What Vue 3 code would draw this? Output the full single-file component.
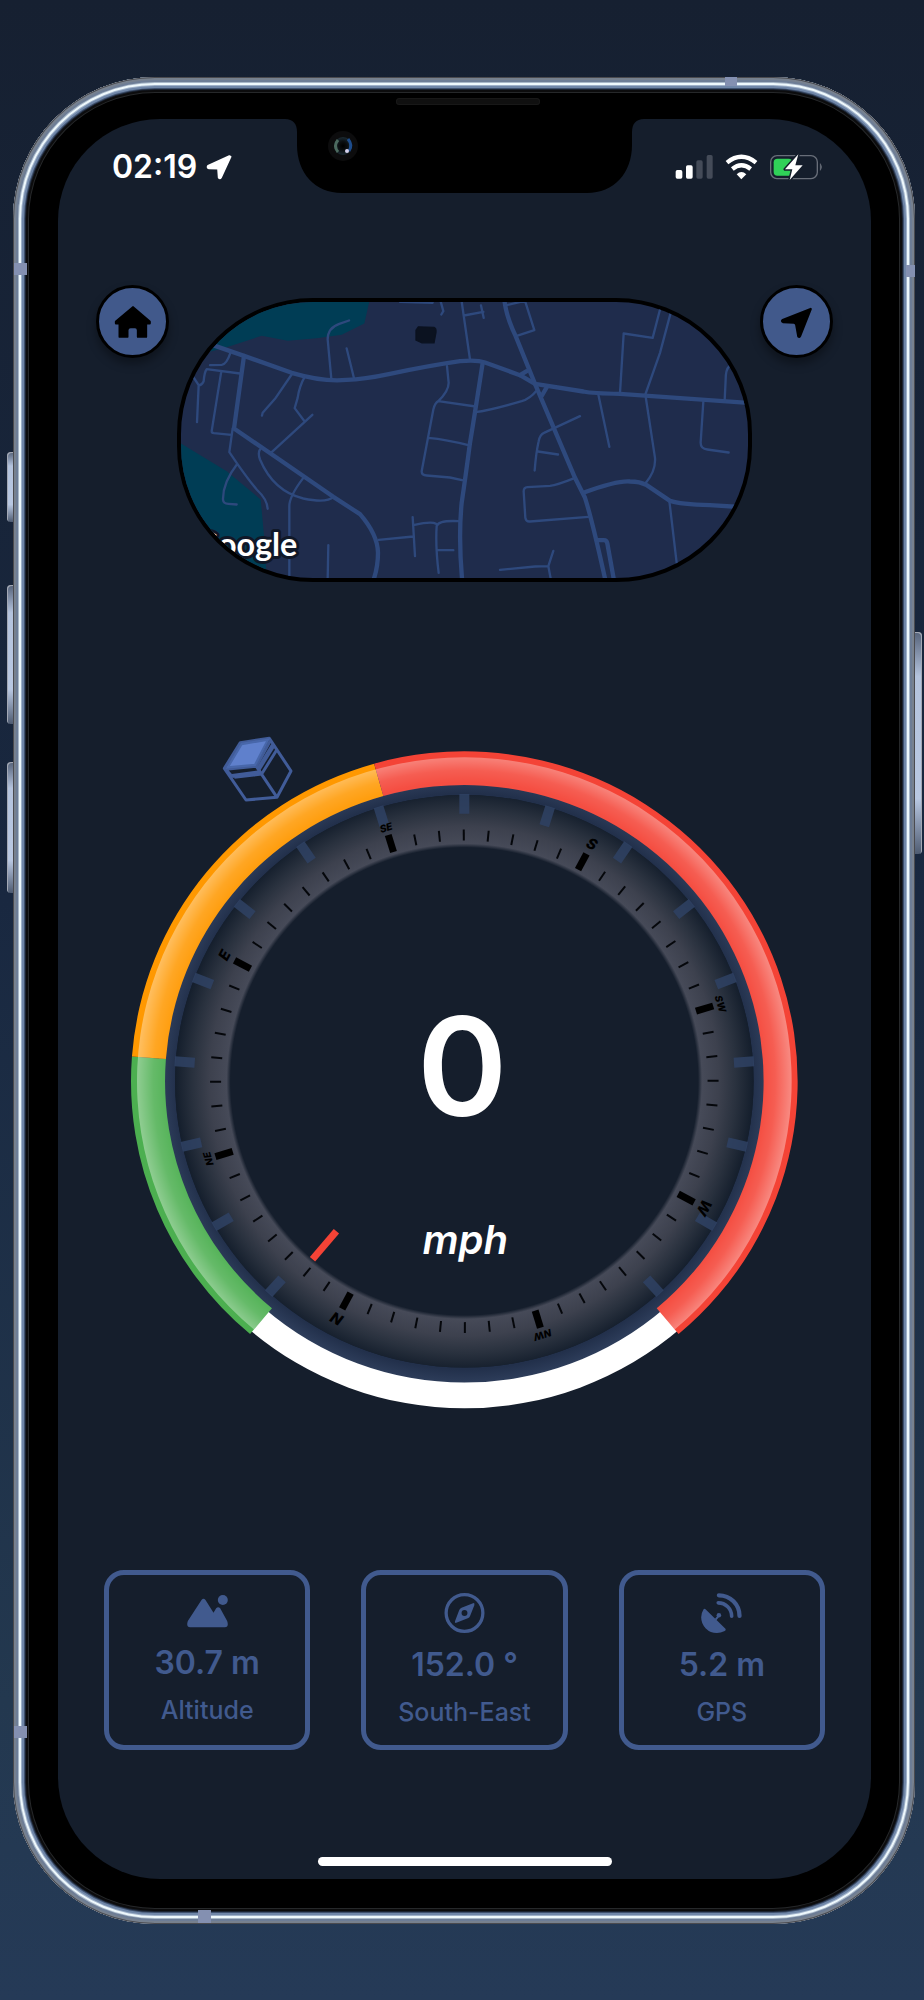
<script setup>
const heading = 152
const rad = (deg) => (deg * Math.PI) / 180
const CX = 333
const CY = 330
const SQUASH = 0.99

function point(r, deg) {
  return [
    (CX + r * Math.sin(rad(deg))).toFixed(2),
    (CY - r * SQUASH * Math.cos(rad(deg))).toFixed(2),
  ]
}

function spoke(r1, r2, deg) {
  const [x1, y1] = point(r1, deg)
  const [x2, y2] = point(r2, deg)
  return { x1, y1, x2, y2 }
}

function band(rIn, rOut, from, to) {
  const large = to - from > 180 ? 1 : 0
  const [a, b, c, d] = [point(rOut, from), point(rOut, to), point(rIn, to), point(rIn, from)]
  return `M${a} A${rOut} ${rOut * SQUASH} 0 ${large} 1 ${b} L${c} A${rIn} ${rIn * SQUASH} 0 ${large} 0 ${d} Z`
}

const zones = [
  { name: 'slow', path: band(299, 333, -140, -85.7) },
  { name: 'medium', path: band(299, 333, -85.7, -15.7) },
  { name: 'fast', path: band(299, 333, -15.7, 140) },
]
const glossPath = band(299, 327, -140, 140)
const restPath = band(304, 330, 139, 221)

const speedTicks = Array.from({ length: 17 }, (_, i) => spoke(270, 290, (i - 8) * 17.2))
const compassTicks = Array.from({ length: 64 }, (_, i) => i)
  .filter((i) => i % 8)
  .map((i) => spoke(243, 254, i * 5.625 - heading))
const directions = ['N', 'NE', 'E', 'SE', 'S', 'SW', 'W', 'NW'].map((name, i) => {
  const angle = i * 45 - heading
  const [x, y] = point(name.length > 1 ? 264 : 266, angle)
  return { name, angle, x, y, mark: spoke(242, 260, angle) }
})
const needle = spoke(198, 235, -139.8)

const speed = 0
const stats = [
  { icon: 'altitude', value: '30.7 m', label: 'Altitude' },
  { icon: 'compass', value: '152.0 °', label: 'South-East' },
  { icon: 'gps', value: '5.2 m', label: 'GPS' },
]
</script>

<template>
  <div class="page">
    <div class="phone">
      <span class="side mute"></span>
      <span class="side volume-up"></span>
      <span class="side volume-down"></span>
      <span class="side power"></span>
      <span class="antenna left-top"></span>
      <span class="antenna right-top"></span>
      <span class="antenna top"></span>
      <span class="antenna left-bottom"></span>
      <span class="antenna bottom"></span>
      <span class="speaker"></span>

      <main class="screen">
        <svg class="notch" viewBox="0 0 359 74" aria-hidden="true">
          <defs>
            <radialGradient id="lens">
              <stop offset="0" stop-color="#000" />
              <stop offset=".5" stop-color="#0b0f12" />
              <stop offset="1" stop-color="#1b2b33" />
            </radialGradient>
          </defs>
          <path d="M0 0C8 0 12 5 12 13V26C12 54 30 74 57 74H302C329 74 347 54 347 26V13C347 5 351 0 359 0Z" />
          <circle cx="58" cy="27" r="15" fill="#0c0c0d" />
          <circle cx="58" cy="27" r="9" fill="url(#lens)" />
          <path d="M53 21Q48 27 53 33" fill="none" stroke="#4c6a5f" stroke-width="3" />
          <path d="M63 20Q68 26 64 32" fill="none" stroke="#1d4c8c" stroke-width="3" />
          <circle cx="62" cy="32" r="2" fill="#d6d2ee" />
        </svg>

        <header class="status">
          <div class="clock">
            <time>02:19</time>
            <svg class="location" viewBox="619 280 78 78" aria-label="Location in use">
              <path d="M689 286L625 315Q621 321 628 323L655 324L657 351Q661 356 664 351L693 288Z" fill="#fff" stroke="#fff" stroke-width="5" stroke-linejoin="round" />
            </svg>
          </div>
          <svg class="indicators" viewBox="640 279 444 78" aria-label="Signal, Wi-Fi and battery">
            <g fill="#fff">
              <rect x="642" y="327" width="20" height="26" rx="5" />
              <rect x="673" y="313" width="20" height="40" rx="5" />
              <rect x="704" y="298" width="19" height="55" rx="5" fill="#444b58" />
              <rect x="735" y="282" width="18" height="71" rx="5" fill="#444b58" />
              <path d="M825 340Q839 326 854 340L839 355Z" />
            </g>
            <g fill="none" stroke="#fff" stroke-width="13">
              <path d="M796 305Q839 270 883 305" />
              <path d="M812 324Q839 302 867 324" />
            </g>
            <rect x="927" y="284" width="140" height="69" rx="19" fill="none" stroke="#686e79" stroke-width="4" />
            <path d="M1076 308Q1083 318 1076 328Z" fill="#686e79" stroke="#686e79" stroke-width="2" />
            <rect x="936" y="293" width="56" height="51" rx="11" fill="#30d158" />
            <path d="M1010 280L970 325H992L984 357L1023 313H1001Z" fill="#fff" stroke="#151e2c" stroke-width="9" stroke-linejoin="round" paint-order="stroke" />
          </svg>
        </header>

        <section class="controls">
          <button class="round" type="button" aria-label="Home">
            <svg viewBox="337 723 120 120">
              <path d="M397 739L346 782V787H357V827H380V808Q380 798 390 798H403Q412 798 412 808V827H436V787H447V782Z" stroke="#000" stroke-width="7" stroke-linejoin="round" />
            </svg>
          </button>
          <div class="map">
            <svg viewBox="63 66 1701 831" preserveAspectRatio="xMidYMid slice" role="img" aria-label="Map">
              <g fill="#003d55">
                <path d="M63 66H628L613 132L545 166L470 176L383 184L305 169L200 203L63 240Z" />
                <path d="M63 492L200 575L302 660L315 800L320 897H63Z" />
              </g>
              <path d="M775 142L822 144Q829 146 828 158L822 190L786 190L768 182V152Z" fill="#0b1220" stroke="#0b1220" stroke-width="4" />
              <g class="roads major">
                <path d="M150 194L252 229L395 280Q490 308 560 301Q610 300 690 283Q810 258 900 245Q950 240 975 249L1080 287L1125 313L1270 336Q1300 342 1380 343L1764 370" />
                <path d="M1033 60Q1038 110 1067 170L1125 313L1245 595L1275 655Q1296 720 1335 897" />
                <path d="M1310 782H1332Q1340 782 1342 792L1361 897" />
                <path d="M252 229L222 447L358 540L520 652L600 704Q653 765 654 820Q654 860 642 897" />
                <path d="M968 250Q945 400 930 490Q917 590 905 670Q895 770 906 897" />
                <path d="M1270 640Q1370 603 1410 606Q1440 606 1460 617L1530 664Q1560 675 1650 677L1764 684" />
                <path d="M1080 287L1100 275M1146 348L1162 320" />
              </g>
              <g class="roads minor">
                <path d="M212 218Q200 255 185 256L150 257M240 282L140 269Q133 278 131 305Q125 318 116 317L98 290M116 317L111 428M184 275L155 455Q154 460 162 461L214 466M218 447L208 518L232 553Q265 600 290 630Q322 660 323 688M232 553Q188 610 189 660Q190 673 205 673L230 675" />
                <path d="M300 510Q293 520 300 540Q340 635 430 657Q500 672 520 652M336 517L457 406M434 426L404 386L413 355Q418 320 434 292M397 282L345 358L308 400L306 408M430 595Q388 650 388 680V897M505 797L503 897" />
                <path d="M514 298L503 180Q503 145 538 133L567 123M560 207L582 296M720 67L818 70M842 66L850 95L844 105M905 66L930 240M912 108L970 97M963 78L971 115M861 260L866 310Q866 335 835 365Q825 370 820 390L785 575Q785 587 800 588L870 594L906 602M835 365L947 381M805 475Q860 480 925 497M656 781L760 771M758 713L765 830M764 736Q815 725 828 733M895 725Q835 722 830 740Q826 800 836 880M832 812H880" />
                <path d="M1040 77L1095 64L1123 152L1068 170M945 398Q990 393 1085 365Q1110 357 1128 335M1260 410L1152 460Q1140 465 1136 485Q1128 520 1124 573M1134 516L1194 525M1245 595Q1190 617 1170 619L1102 623Q1091 624 1091 636L1096 715Q1098 727 1110 726L1285 712M1020 871L1125 861L1165 860L1180 814M1165 860L1172 897" />
                <path d="M1500 90L1478 175L1391 162L1380 340M1532 100L1500 220L1456 345L1485 535Q1488 575 1456 612M1315 345L1348 502M1708 260Q1697 270 1697 300L1694 362M1630 366L1622 488Q1621 508 1642 510L1706 519M1528 664L1550 850" />
              </g>
              <text class="google" x="412" y="828">Google</text>
            </svg>
          </div>
          <button class="round" type="button" aria-label="Centre on my location">
            <svg viewBox="942 723 120 120">
              <path d="M1043 744L959 777Q955 781 960 783L993 785Q999 786 1000 792L1006 826Q1009 829 1011 825Z" stroke="#000" stroke-width="7" stroke-linejoin="round" />
            </svg>
          </button>
        </section>

        <section class="gauge">
          <svg class="cube" viewBox="305 50 213 200" aria-hidden="true">
            <g fill="none" stroke="#415c99" stroke-width="9" stroke-linejoin="round">
              <path d="M360 70L447 57L512 155L470 234L377 242L312 147Z" />
              <path d="M316 150L408 141L450 64M342 174L424 164L469 92M408 141L470 234M336 172L318 152" />
              <path d="M414 150L459 77" stroke-width="14" />
              <path d="M335 170L422 158" stroke-width="12" />
            </g>
            <path d="M364 74L443 61L404 137L322 144Z" fill="#5f80cc" stroke="#4867aa" stroke-width="7" />
          </svg>

          <svg class="dial" viewBox="0 0 666 657" role="img" aria-label="Speedometer with compass ring">
            <defs>
              <radialGradient id="gloss" gradientUnits="userSpaceOnUse" cx="333" cy="330" r="327">
                <stop offset=".914" stop-color="#fff" stop-opacity=".06" />
                <stop offset=".95" stop-color="#fff" stop-opacity=".14" />
                <stop offset="1" stop-color="#fff" stop-opacity=".38" />
              </radialGradient>
              <radialGradient id="bezel" gradientUnits="userSpaceOnUse" cx="333" cy="330" r="289">
                <stop offset=".808" stop-color="#474b59" stop-opacity="0" />
                <stop offset=".822" stop-color="#464a58" />
                <stop offset=".88" stop-color="#3d414e" />
                <stop offset=".94" stop-color="#29313e" />
                <stop offset="1" stop-color="#141e2c" />
              </radialGradient>
              <radialGradient id="rim" gradientUnits="userSpaceOnUse" cx="333" cy="330" r="306">
                <stop offset=".94" stop-color="#22304b" />
                <stop offset="1" stop-color="#31415f" />
              </radialGradient>
            </defs>
            <ellipse cx="333" cy="330" rx="306" ry="303" fill="url(#rim)" />
            <ellipse cx="333" cy="330" rx="289" ry="286" fill="#151e2c" />
            <ellipse cx="333" cy="330" rx="289" ry="286" fill="url(#bezel)" />
            <path :d="restPath" fill="#fff" />
            <path v-for="zone in zones" :key="zone.name" :class="zone.name" :d="zone.path" />
            <path :d="glossPath" fill="url(#gloss)" />
            <line v-for="(tick, i) in speedTicks" :key="'s' + i" class="speed-tick" v-bind="tick" />
            <line v-for="(tick, i) in compassTicks" :key="'c' + i" class="compass-tick" v-bind="tick" />
            <g v-for="dir in directions" :key="dir.name">
              <line class="direction-mark" v-bind="dir.mark" />
              <text
                class="direction"
                :class="{ small: dir.name.length > 1 }"
                :transform="`translate(${dir.x} ${dir.y}) rotate(${dir.angle})`"
              >{{ dir.name }}</text>
            </g>
            <line class="needle" v-bind="needle" />
            <text class="speed" x="331" y="365">{{ speed }}</text>
            <text class="unit" x="334" y="503">mph</text>
          </svg>
        </section>

        <section class="stats">
          <article v-for="stat in stats" :key="stat.label" class="card">
            <svg v-if="stat.icon === 'altitude'" class="icon short" viewBox="289 138 122 108" aria-hidden="true">
              <circle cx="396" cy="153" r="15" />
              <path d="M332 153Q338 145 344 153L368 191L376 178Q382 171 388 178L409 216Q415 235 402 235H298Q285 234 291 216Z" />
            </svg>
            <svg v-else-if="stat.icon === 'compass'" class="icon" viewBox="-50 133 122 122" aria-hidden="true">
              <circle cx="11" cy="194" r="56" fill="none" stroke="currentColor" stroke-width="10" />
              <path fill-rule="evenodd" d="M37 164Q43 163 41 170L28 203Q26 208 21 210L-14 224Q-20 225 -18 219L-5 185Q-3 180 2 178ZM11 185A9 9 0 1 0 11 203A9 9 0 1 0 11 185Z" />
            </svg>
            <svg v-else class="icon" viewBox="720 133 124 122" aria-hidden="true">
              <path d="M727 183Q730 179 734 183L794 242Q797 246 792 249Q779 255 768 255A48 48 0 0 1 720 207Q720 194 727 183Z" />
              <path d="M764 214L772 204" stroke="currentColor" stroke-width="6" />
              <circle cx="774" cy="201" r="7" />
              <path d="M772 163A41 41 0 0 1 813 204" fill="none" stroke="currentColor" stroke-width="11" stroke-linecap="round" />
              <path d="M774 140A63 63 0 0 1 837 203" fill="none" stroke="currentColor" stroke-width="13" stroke-linecap="round" />
            </svg>
            <strong class="value">{{ stat.value }}</strong>
            <span class="label">{{ stat.label }}</span>
          </article>
        </section>

        <div class="home-indicator"></div>
      </main>
    </div>
  </div>
</template>

<style>
body {
  background: #253a55;
}
</style>

<style scoped>
.page {
  box-sizing: border-box;
  min-height: 100vh;
  display: flex;
  padding: 77px 9px 76px 13px;
  background: linear-gradient(#162031, #192840 45%, #23384f 85%, #253a57);
  font-family: Inter, "Liberation Sans", sans-serif;
}

.phone {
  position: relative;
  flex: 1;
  display: flex;
  box-sizing: border-box;
  padding: 42px 44px 45px 45px;
  border-radius: 142px;
  background: #000;
  box-shadow:
    inset 0 0 0 1px #4b4b4f,
    inset 0 0 0 3px #77818f,
    inset 0 0 0 5px #6d7d96,
    inset 0 0 0 6px #a9b8c9,
    inset 0 0 0 8px #eef8fc,
    inset 0 0 0 9px #9fb1c9,
    inset 0 0 0 11px #6f86a8,
    inset 0 0 0 12px #3f516e,
    inset 0 0 0 13px #1a2230,
    inset 0 0 0 15px #0c0c0d,
    inset 0 0 0 16px #26282a;
}

.side {
  position: absolute;
  left: -6px;
  width: 6px;
  border-radius: 4px 0 0 4px;
  background: linear-gradient(#56637a, #b4c3dd 20%, #b9c8e2 75%, #4f5c72);
  box-shadow: inset 1px 1px 0 #a3a8b4;
}
.mute { top: 375px; height: 70px; }
.volume-up { top: 508px; height: 139px; }
.volume-down { top: 685px; height: 131px; }
.power {
  left: auto;
  right: -7px;
  width: 7px;
  top: 555px;
  height: 222px;
  border-radius: 0 4px 4px 0;
  box-shadow: inset -1px 1px 0 #a3a8b4;
}

.antenna {
  position: absolute;
  background: #8490b1;
}
.left-top { left: 1px; top: 186px; width: 13px; height: 12px; }
.left-bottom { left: 1px; top: 1649px; width: 13px; height: 12px; }
.right-top { right: 0; top: 188px; width: 9px; height: 12px; }
.top { right: 178px; top: 0; width: 12px; height: 9px; }
.bottom { left: 185px; bottom: 1px; width: 13px; height: 13px; }

.speaker {
  position: absolute;
  top: 21px;
  left: 50%;
  width: 144px;
  height: 7px;
  margin-left: -68px;
  border-radius: 4px;
  background: #101010;
  box-shadow: inset 0 0 0 1px #181818;
}

.screen {
  position: relative;
  flex: 1;
  min-width: 0;
  display: flex;
  flex-direction: column;
  border-radius: 102px;
  background: #151e2c;
}

.notch {
  position: absolute;
  top: 0;
  left: 50%;
  width: 359px;
  margin-left: -180px;
}

.status {
  display: flex;
  align-items: center;
  justify-content: space-between;
  height: 95px;
  padding: 0 48px 0 54px;
}
.clock {
  display: flex;
  align-items: center;
  gap: 9px;
  color: #fff;
  font-size: 32px;
  line-height: 40px;
  font-weight: 600;
}
.location { width: 26px; }
.indicators { width: 148px; }

.controls {
  display: flex;
  gap: 8px;
  padding: 71px 38px 0;
}
.round {
  flex: none;
  display: grid;
  place-items: center;
  width: 73px;
  height: 73px;
  padding: 0;
  border: 3px solid #000;
  border-radius: 50%;
  background: #41598b;
  box-shadow: 0 6px 10px rgba(0, 0, 0, 0.35);
}
.round svg { width: 40px; }

.map {
  flex: 1;
  min-width: 0;
  box-sizing: border-box;
  height: 284px;
  margin-top: 13px;
  overflow: hidden;
  border: 4px solid #000;
  border-radius: 136px;
  background: #1f2c4c;
}
.map svg {
  display: block;
  width: 100%;
  height: 100%;
}
.roads {
  fill: none;
  stroke: #2e497d;
  stroke-linejoin: round;
  stroke-linecap: round;
}
.major { stroke-width: 13; }
.minor { stroke-width: 7; }
.google {
  font-family: Lato, sans-serif;
  font-size: 97px;
  font-weight: 700;
  text-anchor: end;
  fill: #fff;
  stroke: #101828;
  stroke-width: 18px;
  stroke-linejoin: round;
  paint-order: stroke;
}

.gauge {
  position: relative;
  width: 82%;
  margin: 169px auto 0;
}
.dial {
  display: block;
  width: 100%;
  overflow: visible;
}
.cube {
  position: absolute;
  left: 91px;
  top: -15px;
  width: 71px;
}
.slow { fill: #4caf50; }
.medium { fill: #ff9800; }
.fast { fill: #f44336; }
.speed-tick {
  stroke: #2f4264;
  stroke-opacity: 0.85;
  stroke-width: 10px;
}
.compass-tick {
  stroke: #05070b;
  stroke-width: 2px;
}
.direction-mark {
  stroke: #000;
  stroke-width: 7px;
}
.direction {
  font-size: 15px;
  font-weight: 800;
  font-style: italic;
  text-anchor: middle;
}
.direction.small {
  font-size: 10px;
}
.needle {
  stroke: #f44336;
  stroke-width: 7px;
}
.speed {
  font-size: 137px;
  font-weight: 600;
  text-anchor: middle;
  fill: #fff;
}
.unit {
  font-size: 40px;
  font-weight: 600;
  font-style: italic;
  text-anchor: middle;
  fill: #fff;
}

.stats {
  display: flex;
  gap: 51px;
  padding: 0 46px;
  margin-top: 161px;
}
.card {
  flex: 1;
  min-width: 0;
  box-sizing: border-box;
  display: flex;
  flex-direction: column;
  align-items: center;
  justify-content: center;
  gap: 12px;
  min-height: 180px;
  border: 5px solid #415a8e;
  border-radius: 20px;
  color: #415a8e;
}
.icon {
  width: 41px;
  height: 40px;
  fill: currentColor;
}
.icon.short { height: 36px; }
.value {
  font-size: 32px;
  line-height: 40px;
  font-weight: 600;
}
.label {
  font-size: 25px;
  line-height: 30px;
  font-weight: 500;
}

.home-indicator {
  width: 294px;
  height: 9px;
  margin: auto auto 13px;
  border-radius: 5px;
  background: #fff;
}
</style>
